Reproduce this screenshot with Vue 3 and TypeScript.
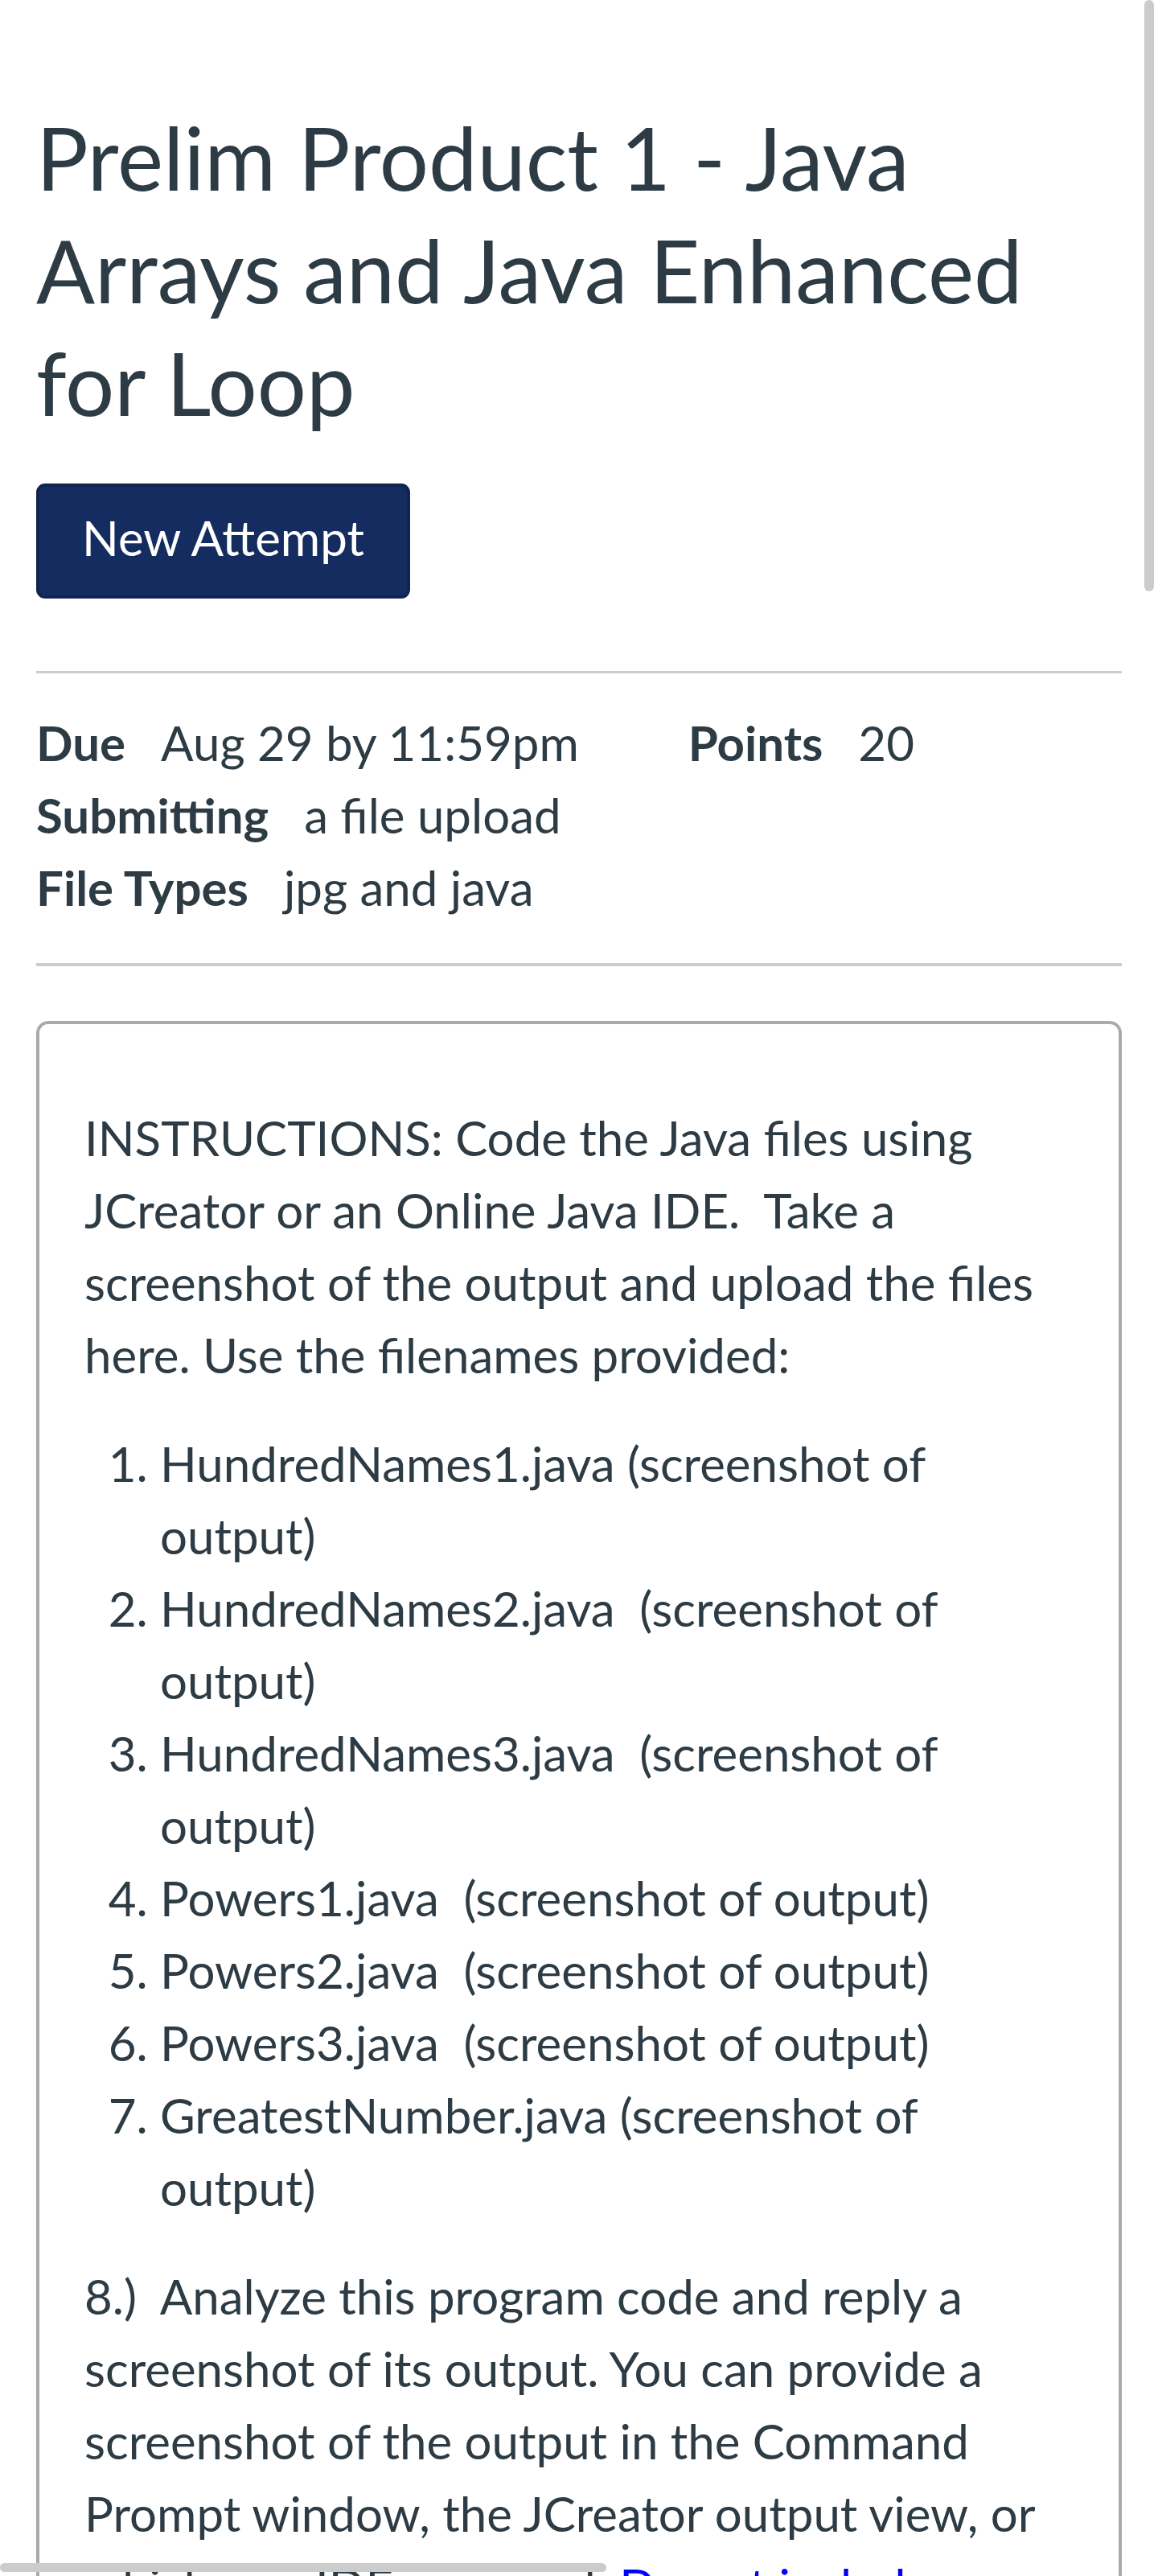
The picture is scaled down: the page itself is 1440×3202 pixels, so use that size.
<script setup lang="ts">
interface Detail {
  label: string
  value: string
}

const details: Detail[] = [
  { label: 'Due', value: 'Aug 29 by 11:59pm' },
  { label: 'Points', value: '20' },
  { label: 'Submitting', value: 'a file upload' },
  { label: 'File Types', value: 'jpg and java' },
]

const files: string[] = [
  'HundredNames1.java (screenshot of output)',
  'HundredNames2.java \u00a0(screenshot of output)',
  'HundredNames3.java \u00a0(screenshot of output)',
  'Powers1.java \u00a0(screenshot of output)',
  'Powers2.java \u00a0(screenshot of output)',
  'Powers3.java \u00a0(screenshot of output)',
  'GreatestNumber.java (screenshot of output)',
]
</script>

<template>
  <div class="viewport">
    <main class="assignment">
      <h1 class="title">Prelim Product 1 - Java Arrays and Java Enhanced for Loop</h1>
      <button type="button" class="attempt">New Attempt</button>

      <dl class="details">
        <div v-for="item in details" :key="item.label" class="detail">
          <dt>{{ item.label }}</dt>
          <dd>{{ item.value }}</dd>
        </div>
      </dl>

      <section class="description">
        <p>
          INSTRUCTIONS: Code the Java files using JCreator or an Online Java IDE.&nbsp; Take a
          screenshot of the output and upload the files here. Use the filenames provided:
        </p>
        <ol>
          <li v-for="file in files" :key="file">{{ file }}</li>
        </ol>
        <p>
          8.)&nbsp; Analyze this program code and reply a screenshot of its output. You can provide a
          screenshot of the output in the Command Prompt window, the JCreator output view, or
          which one IDE you used.&nbsp;<span class="note">Do not include</span>
        </p>
      </section>
    </main>
    <div class="scrollbar vertical" aria-hidden="true"></div>
    <div class="scrollbar horizontal" aria-hidden="true"></div>
  </div>
</template>

<style>
body {
  margin: 0;
  background: #fff;
}
</style>

<style scoped>
.viewport {
  position: relative;
  height: 100vh;
  overflow: hidden;
  color: #2d3b45;
  font-family: Lato, sans-serif;
  font-size: 60px;
  line-height: 90px;
}

.assignment {
  padding: 125px 45px 0;
}

.title {
  margin: 0 0 56px;
  font-size: 108px;
  font-weight: 400;
  line-height: 140px;
}

.attempt {
  display: block;
  padding: 18px 53px 27px;
  border: 4px solid #11244f;
  border-radius: 11px;
  background: #152c61;
  color: #fff;
  font: inherit;
}

.details {
  display: flex;
  flex-wrap: wrap;
  column-gap: 136px;
  margin: 90px 0 68px;
  padding: 41px 0 49px;
  border-top: 3px solid #c7cdd1;
  border-bottom: 4px solid #c7cdd1;
}

.detail {
  display: flex;
  gap: 44px;
}

.detail:nth-child(n + 3) {
  flex-basis: 100%;
}

dt {
  font-weight: 700;
}

dd {
  margin: 0;
}

.description {
  padding: 96px 56px;
  border: 4px solid #aaa;
  border-radius: 15px;
}

.description p {
  margin: 0 0 45px;
}

.description ol {
  margin: 0 0 45px;
  padding: 0 0 0 94px;
}

.note {
  color: #00f;
}

.scrollbar {
  position: absolute;
  border-radius: 6px;
  background: #ccc;
}

.vertical {
  top: 0;
  right: 5px;
  width: 12px;
  height: 735px;
}

.horizontal {
  left: 0;
  bottom: 5px;
  width: 754px;
  height: 11px;
}
</style>
